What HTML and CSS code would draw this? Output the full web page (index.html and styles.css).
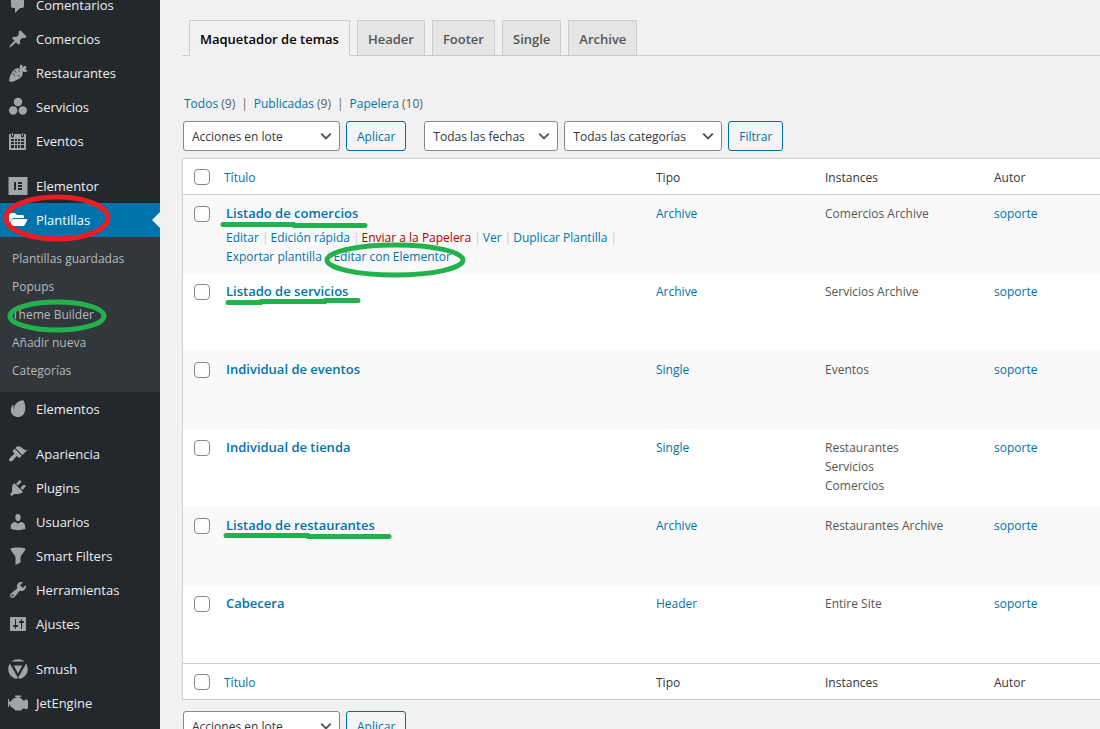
FILE: index.html
```html
<!DOCTYPE html>
<html lang="es">
<head>
<meta charset="utf-8">
<title>Plantillas</title>
<link rel="stylesheet" href="styles.css">
</head>
<body>
<div class="app">
  <nav class="sidebar" aria-label="Menú principal">
    <ul class="menu">
      <li><a href="#"><svg class="icon" viewBox="0 0 20 20"><path d="M5 2h9c1.100 0 2 .9 2 2v7c0 1.100-.9 2-2 2h-2l-5 5v-5H5c-1.100 0-2-.9-2-2V4c0-1.100.9-2 2-2z"/></svg>Comentarios</a></li>
      <li><a href="#"><svg class="icon" viewBox="0 0 20 20"><path d="M10.440 3.020l1.820-1.820 6.360 6.350-1.830 1.820c-1.050-.68-2.480-.57-3.410.36l-.75.75c-.92.93-1.040 2.350-.35 3.410l-1.830 1.820-2.410-2.410-2.800 2.790c-.42.42-3.380 2.710-3.800 2.290s1.860-3.390 2.280-3.810l2.790-2.790L4.100 9.360l1.830-1.820c1.050.69 2.480.57 3.400-.36l.75-.75c.93-.92 1.050-2.350.36-3.410z"/></svg>Comercios</a></li>
      <li><a href="#"><svg class="icon" viewBox="0 0 20 20"><path d="M1.500 18.500C.5 16.500 3 9.500 6 6.800c2.400-2.200 5.400-2 7.300-.1 1.900 1.900 2.100 4.900-.1 7.300-2.700 3-9.700 5.700-11.700 4.500z"/><path d="M12.500 6.500c-1.300-2-1-3.800.5-5.200 1.300.9 1.900 1.900 1.800 3.100.9-1.300 2-1.700 3.300-1.100.5 1.300.2 2.400-1.100 3.200 1.100 0 1.900.5 2.500 1.500-1.500 1.500-3.700 1.400-5.500.3z"/><path d="M6 7.500l2.500 2.300M4.300 10.200l3 2.700M11.500 13.500L9.800 12M10 7l1.500 1.300" fill="none" stroke="#23282d" stroke-width=".9"/></svg>Restaurantes</a></li>
      <li><a href="#"><svg class="icon" viewBox="0 0 20 20"><circle cx="10" cy="5" r="4.200"/><circle cx="5.200" cy="13.500" r="4.200"/><circle cx="14.800" cy="13.500" r="4.200"/></svg>Servicios</a></li>
      <li><a href="#"><svg class="icon" viewBox="0 0 20 20"><path fill-rule="evenodd" d="M1 3h2v2a1.500 1.500 0 0 0 3 0V3h7v2a1.500 1.500 0 0 0 3 0V3h2v16H1zM3 8v2h3V8zm4 0v2h2V8zm3 0v2h2V8zm3 0v2h3V8zM3 11v2h3v-2zm4 0v2h2v-2zm3 0v2h2v-2zm3 0v2h3v-2zM3 14v3h3v-3zm4 0v3h2v-3zm3 0v3h2v-3zm3 0v3h3v-3z"/><path d="M4 2h1v3H4zM14 2h1v3h-1z"/></svg>Eventos</a></li>
      <li class="gap"><a href="#"><svg class="icon" viewBox="0 0 20 20"><path fill-rule="evenodd" d="M.5 1h19v18H.5zM6 6v8h2V6zm4 0v2h4V6zm0 3v2h4V9zm0 3v2h4v-2z"/></svg>Elementor</a></li>
      <li class="current"><a href="#" aria-current="page"><svg class="icon" viewBox="0 0 20 20"><path d="M1 14V4.500C1 3.600 1.600 3 2.500 3H7l2 2h5.500c.9 0 1.500.6 1.500 1.500V8H6.200c-.9 0-1.700.5-2.100 1.200z"/><path d="M5.800 9h12.700c.8 0 1.100.6.8 1.200l-2.600 4.700c-.3.700-1 1.100-1.800 1.100H2c-.7 0-1-.6-.7-1.200L4 10.100C4.400 9.400 5 9 5.800 9z"/></svg>Plantillas</a>
        <ul class="submenu">
          <li><a href="#">Plantillas guardadas</a></li>
          <li><a href="#">Popups</a></li>
          <li><a href="#">Theme Builder</a></li>
          <li><a href="#">Añadir nueva</a></li>
          <li><a href="#">Categorías</a></li>
        </ul>
      </li>
      <li><a href="#"><svg class="icon" viewBox="0 0 20 20"><path d="M15.200 1.300c1.100 1.200 2.600 5.300 2.100 9.200-.5 4.400-3.100 7.600-7 7.600-4.300 0-7.600-3.100-7.500-7.100 0-2.200.9-4.100 2.200-4.900.6-.3.900.2.700.8-.3 1.300-.2 2.600.3 3.500C6 5.500 10 1.400 15.200 1.300z"/></svg>Elementos</a></li>
      <li class="gap"><a href="#"><svg class="icon" viewBox="0 0 20 20"><path d="M14.480 11.060L7.410 3.990l1.500-1.500c.5-.56 2.300-.47 3.510.32 1.210.8 1.430 1.280 2.910 2.100 1.180.64 2.450 1.260 4.450.85zm-.71.71L6.700 4.700 4.930 6.470c-.39.39-.39 1.020 0 1.410l1.060 1.060c.39.39.39 1.030 0 1.420-.6.6-1.430 1.110-2.210 1.690-.35.26-.7.53-1.010.84C1.430 14.230.4 16.080 1.400 17.070c.99 1 2.840-.03 4.180-1.360.31-.31.58-.66.85-1.020.57-.78 1.080-1.610 1.690-2.210.39-.39 1.020-.39 1.410 0l1.060 1.060c.39.39 1.020.39 1.410 0z"/></svg>Apariencia</a></li>
      <li><a href="#"><svg class="icon" viewBox="0 0 20 20"><path d="M13.110 4.360L9.870 7.600 8 5.730l3.240-3.240c.35-.34 1.050-.2 1.560.32.52.51.66 1.210.31 1.550zm-8 1.770l.91-1.120 9.010 9.010-1.190.84c-.71.71-2.630 1.160-3.820 1.160H6.140L4.900 17.260c-.59.59-1.540.59-2.120 0-.59-.58-.59-1.530 0-2.120l1.240-1.240v-3.880c0-1.130.4-3.190 1.090-3.890zm7.260 3.970l3.240-3.240c.34-.35 1.040-.21 1.550.31.52.51.66 1.210.31 1.550l-3.240 3.250z"/></svg>Plugins</a></li>
      <li><a href="#"><svg class="icon" viewBox="0 0 20 20"><path d="M10 9.250c-2.270 0-2.730-3.440-2.730-3.440C7 4.020 7.820 2 9.970 2c2.160 0 2.980 2.020 2.710 3.810 0 0-.41 3.440-2.680 3.440zm0 2.570L12.720 10c2.390 0 4.520 2.330 4.520 4.530v2.490s-3.650 1.130-7.240 1.130c-3.650 0-7.240-1.130-7.240-1.130v-2.490c0-2.250 1.940-4.480 4.470-4.480z"/></svg>Usuarios</a></li>
      <li><a href="#"><svg class="icon" viewBox="0 0 20 20"><path d="M2.500 3C2.500 1 17.500 1 17.500 3c0 2-5 6-5 9v4.500L7.500 19v-7c0-3-5-7-5-9z"/></svg>Smart Filters</a></li>
      <li><a href="#"><svg class="icon" viewBox="0 0 20 20"><path fill-rule="evenodd" d="M16.680 9.770c-1.340 1.340-3.300 1.670-4.950.99l-5.410 6.520c-.99.99-2.590.99-3.580 0s-.99-2.590 0-3.570l6.520-5.420c-.68-1.650-.35-3.610.99-4.950 1.280-1.280 3.120-1.620 4.720-1.060l-2.890 2.890 2.820 2.820 2.860-2.870c.53 1.580.18 3.390-1.080 4.650zM3.810 16.210c.4.39 1.040.39 1.430 0 .4-.4.4-1.040 0-1.430-.39-.4-1.030-.4-1.430 0-.39.39-.39 1.030 0 1.430z"/></svg>Herramientas</a></li>
      <li><a href="#"><svg class="icon" viewBox="0 0 20 20"><path fill-rule="evenodd" d="M18 16V4c0-.55-.45-1-1-1H3c-.55 0-1 .45-1 1v12c0 .55.45 1 1 1h14c.55 0 1-.45 1-1zM8 11h1c.55 0 1 .45 1 1s-.45 1-1 1H8v1.500c0 .28-.22.5-.5.5s-.5-.22-.5-.5V13H6c-.55 0-1-.45-1-1s.45-1 1-1h1V5.500c0-.28.22-.5.5-.5s.5.22.5.5V11zm5-2h-1c-.55 0-1-.45-1-1s.45-1 1-1h1V5.500c0-.28.22-.5.5-.5s.5.22.5.5V7h1c.55 0 1 .45 1 1s-.45 1-1 1h-1v5.500c0 .28-.22.5-.5.5s-.5-.22-.5-.5V9z"/></svg>Ajustes</a></li>
      <li class="gap"><a href="#"><svg class="icon" viewBox="0 0 20 20"><path d="M3.500 2.600C7 -.6 13-.6 16.500 2.600zM1.900 4.500C-2 11 1.500 18.300 8.200 19.800L10 19zM18.100 4.500C22 11 18.500 18.300 11.800 19.800L10 19zM5.700 6.500h8.600L10 14.500z"/></svg>Smush</a></li>
      <li><a href="#"><svg class="icon" viewBox="0 0 20 20"><path d="M0 6h1v2.500h1.500L6 5h2.500V4H7V2.500h6V4h-1.500v1H13l2 2.500h1.500L18 6l2 2v7l-2 1.500-1.500-1H15l-2 2H7.500L5 15l-2-1-1.500-2.500H1V14H0z"/></svg>JetEngine</a></li>
    </ul>
  </nav>

  <main class="content">
    <nav class="tabs" aria-label="Tipos de plantilla">
      <a class="tab tab-active" href="#">Maquetador de temas</a>
      <a class="tab" href="#">Header</a>
      <a class="tab" href="#">Footer</a>
      <a class="tab" href="#">Single</a>
      <a class="tab" href="#">Archive</a>
    </nav>

    <ul class="views">
      <li><a href="#">Todos <span class="count">(9)</span></a></li>
      <li><a href="#">Publicadas <span class="count">(9)</span></a></li>
      <li><a href="#">Papelera <span class="count">(10)</span></a></li>
    </ul>

    <form class="toolbar">
      <div class="group">
        <select class="select select-bulk" aria-label="Acciones en lote"><option>Acciones en lote</option></select>
        <button class="button" type="button">Aplicar</button>
      </div>
      <div class="group">
        <select class="select select-date" aria-label="Filtrar por fecha"><option>Todas las fechas</option></select>
        <select class="select select-category" aria-label="Filtrar por categoría"><option>Todas las categorías</option></select>
        <button class="button" type="button">Filtrar</button>
      </div>
    </form>

    <table class="list">
      <colgroup><col class="col-check"><col><col class="col-meta"><col class="col-meta"><col class="col-author"></colgroup>
      <thead>
        <tr><td class="check"><input type="checkbox" aria-label="Seleccionar todo"></td><th scope="col"><a href="#">Título</a></th><th scope="col">Tipo</th><th scope="col">Instances</th><th scope="col">Autor</th></tr>
      </thead>
      <tbody>
        <tr><td class="check"><input type="checkbox" aria-label="Listado de comercios"></td>
          <td class="title"><a class="row-title" href="#">Listado de comercios</a>
            <div class="actions"><div class="action-line"><a href="#">Editar</a><a href="#">Edición rápida</a><a class="trash" href="#">Enviar a la Papelera</a><a href="#">Ver</a><a href="#">Duplicar Plantilla</a></div><div class="action-line"><a href="#">Exportar plantilla</a><a class="last" href="#">Editar con Elementor</a></div></div></td>
          <td><a href="#">Archive</a></td><td>Comercios Archive</td><td><a href="#">soporte</a></td></tr>
        <tr><td class="check"><input type="checkbox" aria-label="Listado de servicios"></td><td class="title"><a class="row-title" href="#">Listado de servicios</a></td><td><a href="#">Archive</a></td><td>Servicios Archive</td><td><a href="#">soporte</a></td></tr>
        <tr><td class="check"><input type="checkbox" aria-label="Individual de eventos"></td><td class="title"><a class="row-title" href="#">Individual de eventos</a></td><td><a href="#">Single</a></td><td>Eventos</td><td><a href="#">soporte</a></td></tr>
        <tr><td class="check"><input type="checkbox" aria-label="Individual de tienda"></td><td class="title"><a class="row-title" href="#">Individual de tienda</a></td><td><a href="#">Single</a></td><td>Restaurantes<br>Servicios<br>Comercios</td><td><a href="#">soporte</a></td></tr>
        <tr><td class="check"><input type="checkbox" aria-label="Listado de restaurantes"></td><td class="title"><a class="row-title" href="#">Listado de restaurantes</a></td><td><a href="#">Archive</a></td><td>Restaurantes Archive</td><td><a href="#">soporte</a></td></tr>
        <tr><td class="check"><input type="checkbox" aria-label="Cabecera"></td><td class="title"><a class="row-title" href="#">Cabecera</a></td><td><a href="#">Header</a></td><td>Entire Site</td><td><a href="#">soporte</a></td></tr>
      </tbody>
      <tfoot>
        <tr><td class="check"><input type="checkbox" aria-label="Seleccionar todo"></td><th scope="col"><a href="#">Título</a></th><th scope="col">Tipo</th><th scope="col">Instances</th><th scope="col">Autor</th></tr>
      </tfoot>
    </table>

    <form class="toolbar toolbar-bottom">
      <div class="group">
        <select class="select select-bulk" aria-label="Acciones en lote"><option>Acciones en lote</option></select>
        <button class="button" type="button">Aplicar</button>
      </div>
    </form>
  </main>

  <svg class="marks" width="1100" height="729" viewBox="0 0 1100 729" aria-hidden="true">
    <ellipse cx="57" cy="218" rx="51" ry="21" stroke="#ed1c24"/>
    <ellipse cx="57" cy="316" rx="47" ry="14"/>
    <ellipse cx="395" cy="260" rx="68" ry="15"/>
    <path d="M223 224.500H294M294 225.500H365M228 302.500H261M261 301.500H325M325 300.500H358M226 535.500H308M308 536.500H389"/>
  </svg>
</div>
</body>
</html>
```

FILE: styles.css
```css
* {
  box-sizing: border-box;
}

body {
  margin: 0;
  background: #f1f1f1;
  color: #32373c;
  font-family: "Open Sans", "Noto Sans", sans-serif;
  font-size: 12px;
  line-height: 19px;
}

a {
  color: #0073aa;
  text-decoration: none;
}

ul {
  list-style: none;
  margin: 0;
  padding: 0;
}

.app {
  position: relative;
  display: flex;
  height: 100vh;
  overflow: hidden;
}

.sidebar {
  flex: 0 0 160px;
  background: #23282d;
}

.menu {
  margin-top: -12px;
}

.menu > li > a {
  display: flex;
  align-items: center;
  gap: 8px;
  height: 34px;
  padding-left: 8px;
  color: #eee;
  font-size: 13px;
}

.menu > .gap {
  margin-top: 11px;
}

.icon {
  width: 20px;
  height: 20px;
  color: #a0a5aa;
  fill: currentColor;
}

.menu > .current > a {
  position: relative;
  background: #0073aa;
  color: #fff;
}

.menu > .current > a::after {
  content: "";
  position: absolute;
  right: 0;
  top: 9px;
  border: 8px solid transparent;
  border-left: 0;
  border-right-color: #f1f1f1;
}

.current .icon {
  color: #fff;
}

.submenu {
  padding: 8px 0 7px;
  background: #32373c;
}

.submenu a {
  display: block;
  padding: 0 12px;
  color: #b4b9be;
  line-height: 28px;
}

.content {
  flex: 1;
  min-width: 0;
  padding: 20px 0 0 22px;
}

.tabs {
  display: flex;
  gap: 7px;
  padding-left: 7px;
  border-bottom: 1px solid #ccc;
}

.tab {
  padding: 5px 10px;
  border: 1px solid #ccc;
  border-bottom: 0;
  background: #e5e5e5;
  color: #555;
  font-size: 13px;
  font-weight: 600;
  line-height: 24px;
}

.tab-active {
  margin-bottom: -1px;
  border-bottom: 1px solid #f1f1f1;
  background: #f1f1f1;
  color: #000;
}

.tabs .tab {
  padding-top: 6px;
  padding-bottom: 4px;
}

.views {
  display: flex;
  margin: 38px 0 8px;
  padding-left: 2px;
}

.views li + li::before {
  content: "|";
  padding: 0 6px;
  color: #666;
}

.count {
  color: #555d66;
}

.toolbar {
  display: flex;
  gap: 18px;
  padding-left: 1px;
}

.group {
  display: flex;
  gap: 6px;
}

.select,
.button {
  height: 30px;
  border-radius: 3px;
  font-family: inherit;
  font-size: 12px;
}

.select {
  appearance: none;
  padding: 0 8px;
  border: 1px solid #7e8993;
  background: #fff url("data:image/svg+xml,%3Csvg xmlns='http://www.w3.org/2000/svg' viewBox='0 0 20 20'%3E%3Cpath d='M4 7l6 6 6-6' fill='none' stroke='%23555' stroke-width='2.500'/%3E%3C/svg%3E") no-repeat right 5px center / 16px 16px;
  color: #32373c;
}

.select-bulk {
  width: 157px;
}

.select-date {
  width: 134px;
}

.select-category {
  width: 158px;
}

.button {
  padding: 0 10px;
  border: 1px solid #0071a1;
  background: #f3f5f6;
  color: #0071a1;
}

.list {
  width: 100%;
  margin-top: 7px;
  border: 1px solid #ccd0d4;
  border-right: 0;
  border-spacing: 0;
  table-layout: fixed;
  background: #fff;
}

.col-check {
  width: 33px;
}

.col-meta {
  width: 169px;
}

.col-author {
  width: 116px;
}

.list th,
.list td {
  padding: 9px 10px 7px;
  text-align: left;
  vertical-align: top;
  font-weight: 400;
}

.list th:nth-child(2) {
  padding-left: 8px;
}

.list thead th,
.list thead td {
  border-bottom: 1px solid #ccd0d4;
}

.list tfoot th,
.list tfoot td {
  border-top: 1px solid #ccd0d4;
}

.list tbody td {
  height: 78px;
  color: #555;
}

.list tbody tr:nth-child(odd) {
  background: #f9f9f9;
}

.list td.check {
  padding: 10px 0 0 11px;
}

.list tbody td.check {
  padding-top: 11px;
}

.check input {
  display: block;
  appearance: none;
  width: 16px;
  height: 16px;
  margin: 0;
  border: 1px solid #7e8993;
  border-radius: 4px;
  background: #fff;
}

.row-title {
  font-size: 13px;
  font-weight: 600;
}

.actions {
  padding-top: 5px;
  color: #ccc;
  white-space: nowrap;
}

.action-line {
  display: flex;
}

.action-line a::after {
  content: "|";
  padding: 0 2px 0 3px;
  color: #ccc;
}

.action-line .last::after {
  content: none;
}

.actions .trash {
  color: #a00;
}

.toolbar-bottom {
  margin-top: 11px;
}

.marks {
  position: absolute;
  left: 0;
  top: 0;
  fill: none;
  stroke: #22b14c;
  stroke-width: 5;
  stroke-linecap: round;
  pointer-events: none;
}
```
